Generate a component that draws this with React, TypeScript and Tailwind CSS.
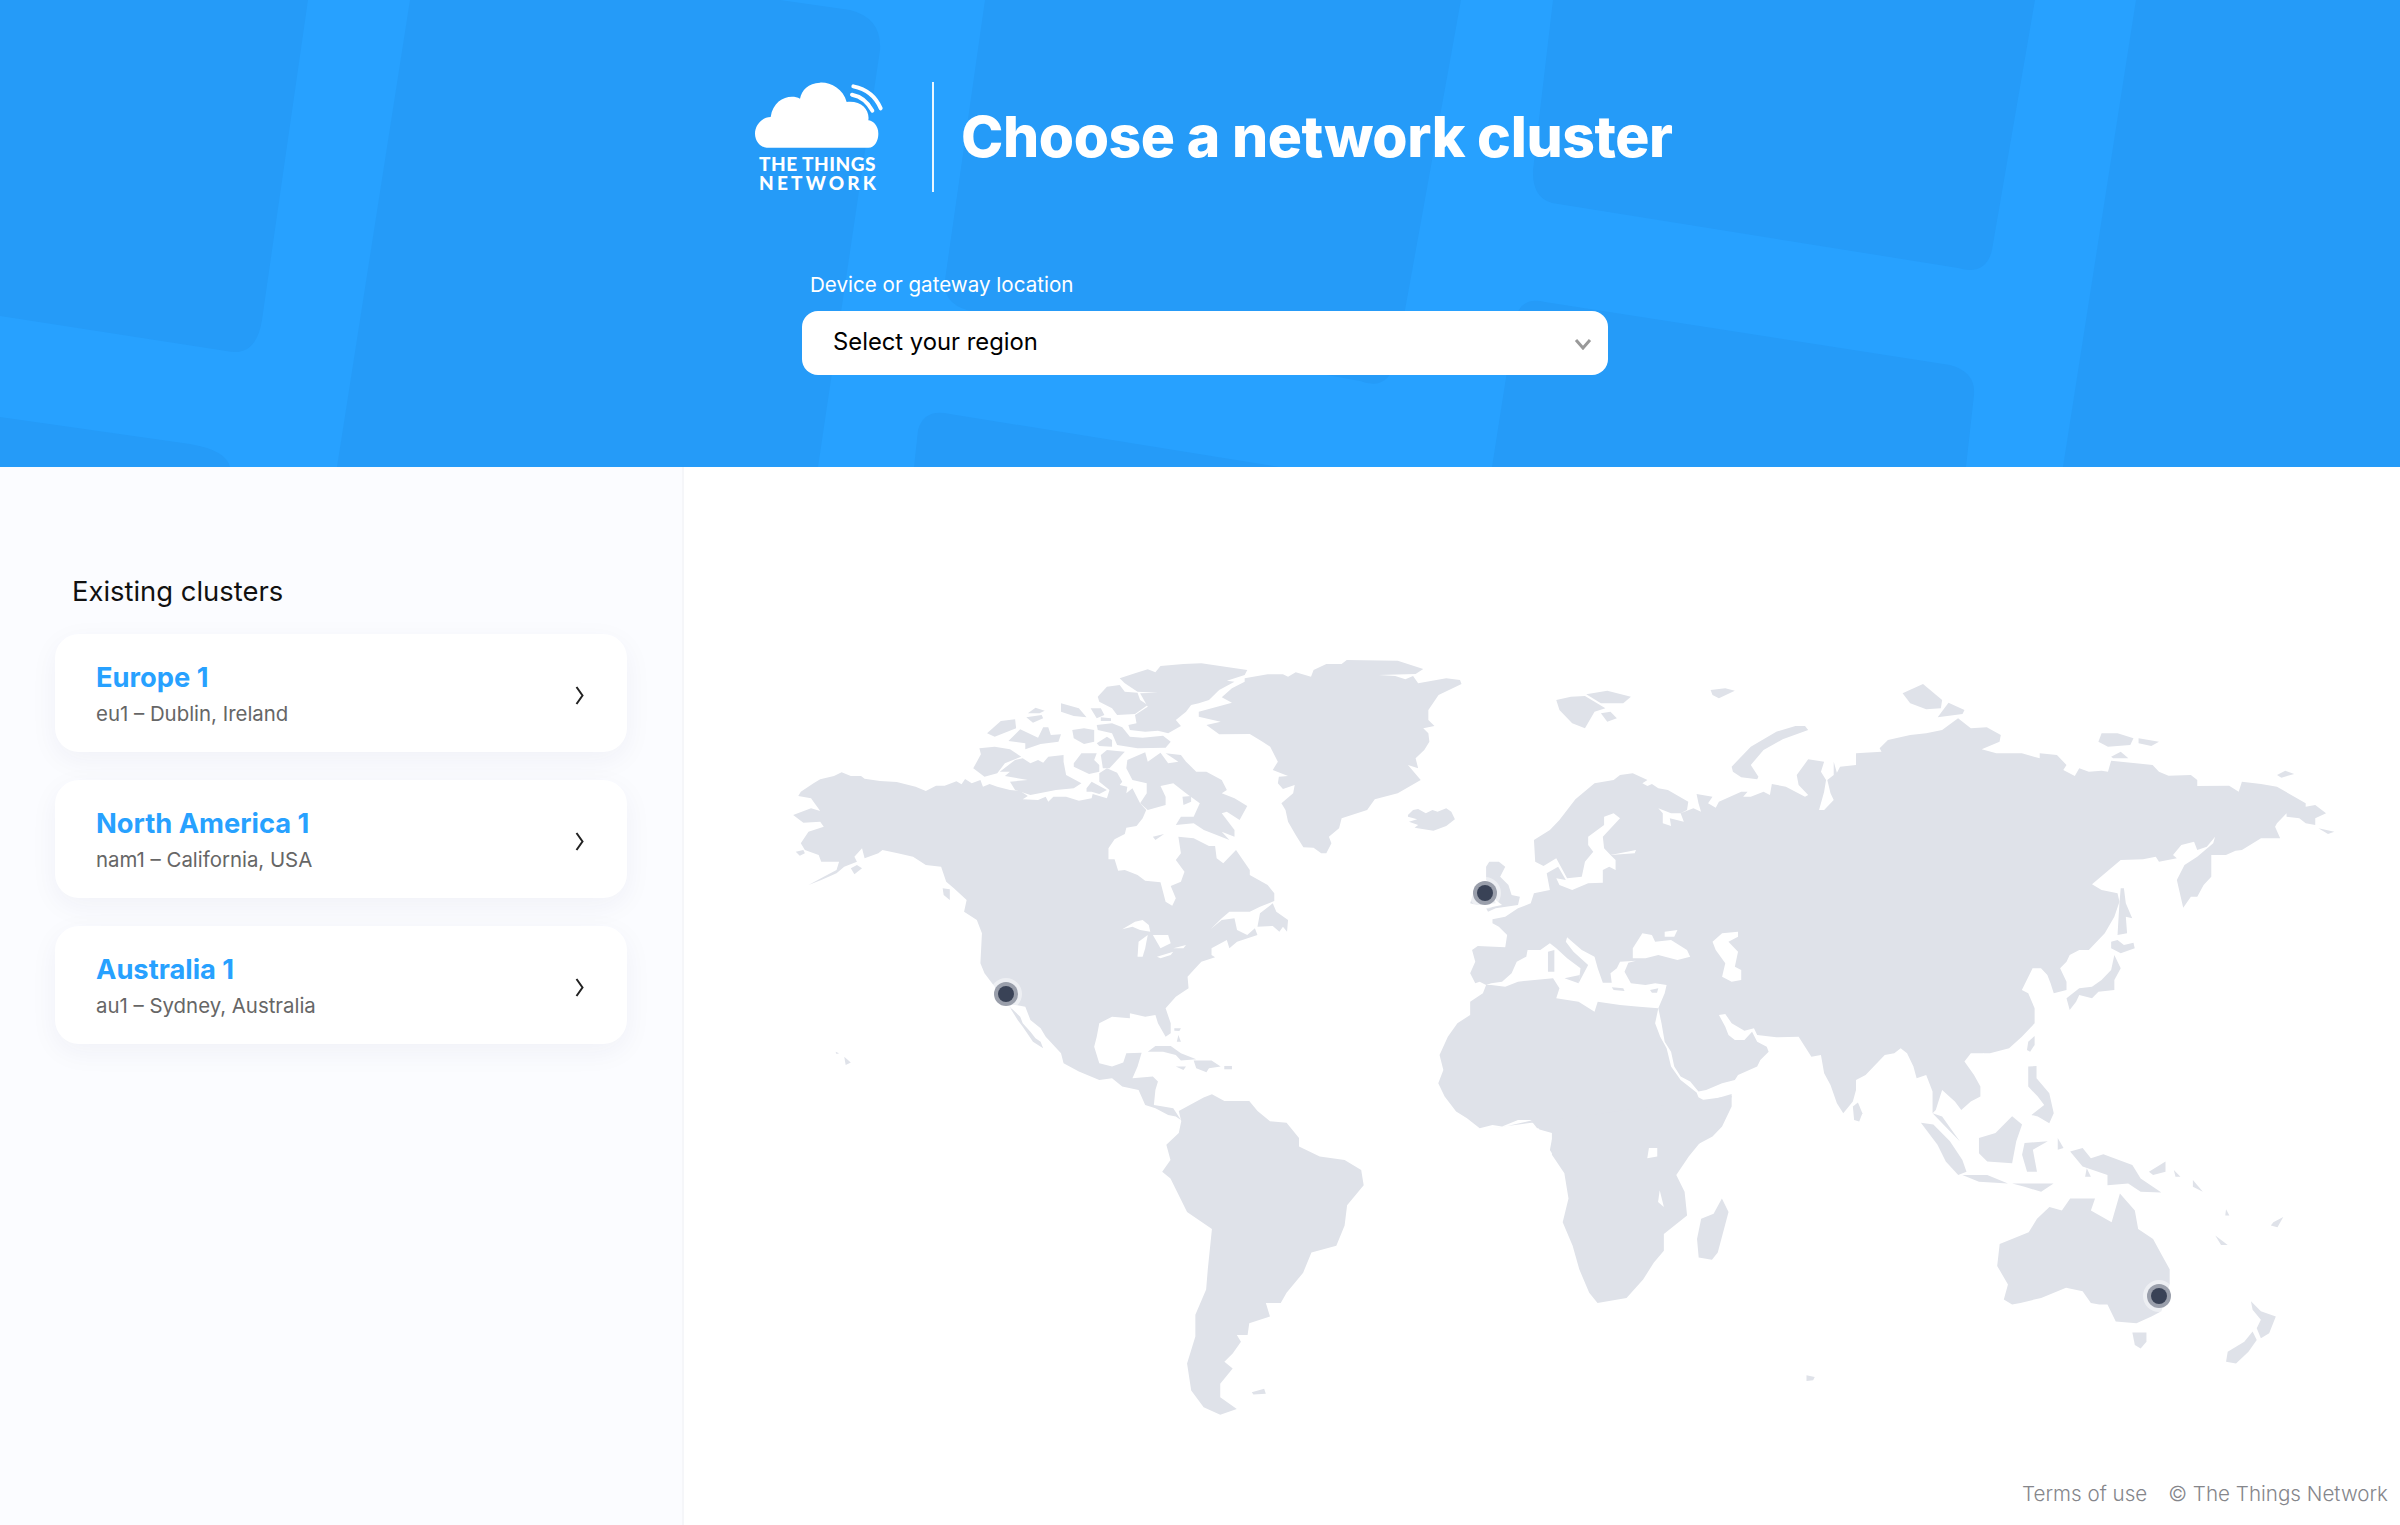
const sans = "font-['Inter','Liberation_Sans',sans-serif]";

// map outlines, traced from three crops, so each group has its own scale
const americas = [
  "65,525 100,505 118,513 100,475 75,468 80,455 105,430 118,418 145,408 160,397 178,408 198,408 205,416 235,423 268,426 305,440 325,453 345,437 362,437 385,424 395,433 402,417 415,430 432,420 437,440 450,432 465,440 490,450 510,453 525,468 515,478 545,480 560,470 565,485 575,470 600,470 625,482 650,475 652,462 670,470 680,475 685,450 665,425 665,400 680,385 700,398 710,425 705,435 720,440 718,460 730,445 745,490 757,510 750,535 738,558 718,563 715,582 695,598 683,625 683,658 695,658 702,692 715,690 740,705 755,722 785,727 795,785 808,797 815,775 805,738 825,725 832,695 815,660 825,640 820,590 850,595 880,618 892,618 895,655 908,670 933,630 960,690 960,705 995,735 1008,760 1008,783 980,800 960,815 920,815 905,835 883,868 905,840 930,835 935,870 955,885 970,865 975,885 935,905 920,925 915,900 885,925 885,945 892,952 865,965 850,990 838,1010 840,1045 815,1070 795,1105 805,1150 805,1180 795,1190 780,1150 775,1125 755,1130 725,1120 725,1135 690,1130 665,1150 660,1190 655,1220 665,1270 690,1280 712,1268 718,1240 748,1238 740,1280 730,1315 770,1310 780,1325 775,1350 772,1395 790,1400 810,1405 825,1440 815,1430 800,1425 775,1405 755,1395 742,1350 710,1340 690,1315 665,1320 625,1295 595,1270 590,1240 560,1190 550,1165 530,1140 520,1100 500,1095 485,1095 460,1040 440,1000 432,970 435,880 425,840 400,815 405,780 380,745 365,725 355,680 325,675 300,650 270,640 240,630 232,640 205,655 200,625 185,650 190,665 165,680 150,700 120,720 95,735 125,710 150,690 155,665 120,665 115,645 88,630 80,610 95,575 125,560 118,545 85,548",
  "720,360 755,337 760,365 785,338 800,370 820,365 795,340 825,345 835,365 855,395 875,395 905,420 915,450 905,460 930,475 955,498 940,540 915,515 905,520 930,570 930,590 905,575 920,600 870,570 850,550 815,555 825,530 850,530 862,490 835,460 810,430 785,438 795,470 795,495 760,510 745,490 758,460 758,430 730,420 718,385",
  "705,115 735,100 760,88 775,97 785,78 830,72 865,70 955,90 950,105 915,122 930,125 900,150 880,180 860,190 845,195 835,215 815,240 825,258 800,280 780,272 755,275 725,270 722,255 738,250 735,225 760,200 745,160 780,158 740,155 715,130",
  "662,170 680,140 705,135 715,155 740,158 745,180 760,195 735,222 700,225 690,205 665,185",
  "660,255 690,250 710,262 725,290 750,293 790,287 805,305 795,323 740,325 700,315 690,280 662,270",
  "660,310 680,290 690,300 690,320 665,318",
  "668,232 688,235 688,243 668,243",
  "648,205 668,205 675,225 660,235",
  "590,190 625,205 640,232 615,228 590,215",
  "525,220 540,203 558,212 548,220",
  "522,232 552,225 555,235 535,248",
  "445,280 472,243 500,238 502,265 460,290",
  "487,303 510,268 545,293 555,262 565,262 570,285 590,283 585,305 550,312 520,328 520,310",
  "612,270 635,265 655,270 655,305 635,312 615,295",
  "430,325 460,320 490,328 512,350 480,370 465,400 440,410 418,385 433,343",
  "470,395 500,360 515,355 530,370 545,360 555,368 565,350 595,345 595,365 600,405 630,430 615,445 580,450 530,465 500,450 490,425 525,420 480,408 490,395",
  "615,370 630,340 660,340 655,360 665,375 665,395 645,402 615,380",
  "668,345 680,330 715,335 700,360 685,385 672,385",
  "640,445 650,425 680,450 665,462 650,455 640,455",
  "860,215 925,188 905,172 925,145 950,125 950,115 995,103 1025,103 1035,110 1050,97 1080,110 1085,90 1110,72 1140,72 1150,60 1250,62 1300,87 1285,102 1212,105 1245,108 1265,118 1280,108 1290,130 1345,115 1372,120 1375,132 1330,165 1310,210 1310,240 1322,258 1300,265 1310,280 1312,305 1302,330 1285,355 1290,385 1270,375 1295,420 1250,460 1205,478 1190,510 1140,535 1135,565 1115,590 1120,610 1110,640 1100,640 1085,623 1065,622 1050,585 1035,545 1030,510 1022,490 1045,460 1048,435 1025,447 1015,430 1017,410 1035,408 1005,390 1015,365 1000,320 985,305 960,282 900,283 875,255 903,245 860,230",
  "1270,525 1280,510 1290,507 1305,520 1318,510 1328,515 1345,505 1355,515 1362,538 1345,558 1320,572 1283,563 1290,555 1272,545 1288,538 1270,530",
  "975,860 980,820 1005,790 1012,815 1035,840 1033,875 1025,860 1018,875 1005,858",
  "770,590 792,582 775,600",
  "828,470 845,468 845,485 830,495",
  "358,745 372,748 372,780 360,765",
  "760,1235 775,1218 805,1218 825,1240 855,1258 825,1262 815,1245 790,1235",
  "850,1262 885,1262 903,1280 880,1285 875,1297 855,1285",
  "815,1280 835,1280 830,1290",
  "910,1278 925,1278 925,1288 910,1288",
  "812,1165 825,1165 822,1173 812,1172",
  "820,1185 825,1205 817,1205",
  "488,1098 510,1130 515,1150 530,1175 540,1195 550,1205 555,1225 535,1205 515,1160 505,1140",
  "70,635 85,630 88,640 78,647",
  "178,685 190,675 200,685 185,703",
  "148,1235 155,1240 150,1242",
  "165,1250 178,1268 168,1275",
];
const lakes = [
  "710,868 735,845 750,840 762,855 765,875 745,870 730,860",
  "740,950 742,905 760,885 755,925 750,950",
  "770,885 800,885 805,910 785,925",
  "778,950 810,935 805,945 785,955",
  "810,925 835,915 830,925",
];
const eurasia = [
  "210,600 235,570 250,540 275,478 305,430 335,420 345,405 365,400 388,420 380,430 388,438 395,432 405,445 420,450 452,485 450,510 440,520 425,520 405,505 412,520 412,550 425,558 423,535 445,545 440,520 460,505 472,515 468,490 465,462 490,470 483,490 495,503 500,485 535,455 545,455 538,470 550,470 570,455 580,465 583,432 605,440 635,470 640,465 625,435 622,405 640,358 665,365 660,395 668,420 665,455 657,510 665,510 680,480 675,460 670,420 680,405 680,365 685,398 690,380 715,375 715,340 755,335 752,325 765,300 800,285 825,280 850,270 875,235 895,265 920,262 942,285 940,305 912,328 935,340 975,340 1003,355 1003,340 1030,345 1045,375 1040,390 1058,408 1065,385 1080,395 1100,392 1110,395 1115,362 1180,375 1190,395 1205,407 1240,405 1250,420 1250,438 1300,437 1315,455 1320,425 1350,432 1375,440 1420,490 1420,500 1435,495 1452,520 1435,535 1435,555 1420,550 1410,535 1390,530 1390,520 1375,550 1372,560 1380,595 1350,595 1320,630 1310,632 1295,645 1272,645 1272,710 1260,735 1250,770 1240,770 1228,803 1218,720 1230,675 1250,650 1275,610 1278,590 1265,620 1250,630 1245,605 1225,615 1212,645 1218,655 1190,665 1185,650 1165,658 1130,660 1085,733 1100,750 1125,760 1128,785 1120,830 1105,880 1080,930 1065,930 1050,945 1045,965 1035,985 1045,1025 1045,1050 1025,1060 1020,1030 1015,1005 1005,985 990,985 980,1010 968,1000 965,990 990,965 993,980 975,1050 985,1060 995,1105 995,1150 975,1190 955,1225 925,1240 910,1240 895,1240 885,1265 900,1305 910,1340 910,1370 895,1385 880,1410 870,1385 850,1350 840,1410 835,1420 850,1430 865,1470 878,1505 855,1460 835,1420 835,1355 825,1305 810,1315 805,1280 795,1240 785,1225 775,1240 760,1245 745,1275 730,1305 715,1320 715,1350 710,1385 695,1420 685,1390 675,1335 665,1300 660,1245 645,1250 625,1190 590,1192 560,1185 555,1165 540,1172 520,1150 510,1122 500,1125 510,1160 515,1185 525,1200 540,1200 552,1175 560,1205 575,1220 578,1235 565,1260 560,1280 530,1305 525,1320 505,1330 480,1350 468,1355 455,1325 440,1310 430,1280 425,1235 415,1205 410,1150 405,1105 415,1060 418,1035 400,1030 385,1035 362,1030 352,995 358,968 370,962 345,965 340,985 330,1000 332,1028 318,1028 310,985 305,950 285,930 270,905 262,892 260,905 272,935 295,975 280,1030 283,985 262,955 245,925 235,910 220,930 200,930 198,950 183,965 175,1000 160,1025 143,1030 135,1035 125,1025 118,1030 110,1000 118,965 113,930 122,918 165,922 168,885 155,860 145,850 145,838 165,830 185,805 205,790 210,760 235,750 230,700 248,680 260,720 245,715 250,735 270,750 295,730 318,728 318,690 328,680 338,690 338,660 330,645 368,640 370,630 330,645 320,625 318,590 345,535 335,520 320,530 320,555 295,590 295,615 303,635 290,665 285,710 262,715 245,655 225,678 212,665",
  "135,1035 143,1035 165,1040 185,1025 240,1015 250,1045 245,1075 280,1085 305,1115 310,1085 345,1095 375,1100 405,1105 400,1150 408,1190 418,1225 425,1280 440,1320 465,1358 468,1372 480,1385 520,1362 520,1400 505,1460 490,1490 465,1515 445,1560 245,1560 235,1530 240,1480 230,1462 215,1465 205,1440 185,1440 160,1460 145,1455 125,1465 105,1435 88,1415 70,1370 60,1330 68,1290 62,1245 75,1190 90,1150 110,1125 110,1085 130,1060",
  "332,1042 350,1045 352,1053 335,1050",
  "392,1050 405,1045 403,1058 395,1058",
  "258,1015 282,1005 280,1030",
  "232,935 242,930 242,995 232,995",
  "135,680 140,665 155,665 165,680 157,710 170,735 175,765 188,770 185,795 150,805 138,815 135,805 160,795 150,780 150,745 135,720",
  "110,790 115,760 125,745 145,750 150,790 120,795",
  "245,180 268,170 290,168 322,205 305,215 290,265 270,250 250,210",
  "292,163 325,152 362,170 350,190 315,190",
  "315,220 330,215 340,235 325,245",
  "487,150 510,145 525,152 500,175 490,165",
  "520,380 550,320 590,275 620,258 635,258 640,270 600,298 570,330 550,375 562,410 560,418 535,412 522,395",
  "788,160 820,132 850,180 848,205 825,208 800,190",
  "843,232 860,188 885,210 882,222",
  "1095,305 1100,280 1125,280 1150,295 1145,315 1110,320",
  "1158,295 1190,305 1178,318 1158,310",
  "1115,350 1130,335 1142,355 1118,355",
  "1375,405 1388,392 1402,402 1382,413",
  "1440,565 1465,575 1455,582",
  "1130,745 1135,745 1138,790 1148,835 1138,830 1140,880 1125,885 1128,790",
  "1115,925 1130,940 1152,925 1150,908 1135,915 1125,900 1115,905",
  "1120,945 1130,985 1120,1020 1120,1050 1095,1055 1085,1075 1065,1065 1060,1085 1050,1110 1045,1075 1065,1045 1085,1040 1100,1020 1115,990",
  "983,1230 985,1205 995,1188 995,1215 988,1235",
  "710,1400 718,1388 725,1420 720,1445 712,1440",
  "985,1280 998,1278 998,1315 1018,1360 1025,1420 1018,1450 1000,1430 990,1425 1010,1395 1000,1370 985,1340",
];
const seas = [
  "365,955 365,925 380,880 395,885 400,905 425,900 450,930 455,950 435,960 405,945 385,955",
  "415,875 435,870 430,890 415,890",
  "490,905 505,880 530,875 530,890 515,905 530,935 525,980 535,990 535,1020 520,1025 505,1010 510,970 495,930",
  "905,1260 915,1240 920,1265 910,1285",
];
const south = [
  "95,330 125,290 135,280 150,300 180,300 190,330 205,360 225,365 240,410 240,435 265,465 295,475 315,505 318,550 298,610 295,670 285,730 255,750 245,810 225,870 218,900 200,900 205,940 180,960 178,995 165,995 170,1015 160,1050 150,1075 160,1095 145,1140 145,1180 165,1215 145,1232 125,1210 110,1160 105,1080 115,1000 115,935 128,860 130,800 135,680 105,630 85,530 75,510 85,475 80,430 95,395 98,360",
  "460,385 490,375 520,358 530,385 545,395 545,460 560,515 565,590 558,660 570,730 578,800 590,870 600,900 635,885 655,830 668,780 680,745 680,695 708,640 705,570 695,520 710,465 725,420 750,370 762,285",
  "750,590 758,630 745,750 738,772 722,765 720,710 725,650 740,635",
  "183,1165 198,1155 200,1170 185,1172",
  "852,1115 862,1120 860,1130 852,1132",
  "990,365 1005,370 1025,420 1040,475 1045,510 1035,520 1020,480 1010,430",
  "1040,520 1070,520 1095,545 1060,540",
  "1060,410 1080,395 1100,345 1112,370 1105,420 1100,485 1070,480 1060,455",
  "1115,425 1143,420 1125,445 1130,510 1118,510 1112,460",
  "1100,545 1150,545 1135,570 1115,555",
  "1170,450 1185,440 1195,470 1210,458 1245,490 1255,530 1280,572 1255,570 1240,545 1215,550 1215,520 1185,495",
  "1155,410 1162,440 1155,445",
  "1190,500 1195,525 1188,525",
  "1265,510 1285,480 1285,510 1270,520",
  "1295,505 1303,525 1297,525",
  "1318,535 1330,570 1318,555",
  "1358,622 1362,640 1357,640",
  "1415,660 1427,645 1420,675 1412,670",
  "1345,700 1360,728 1352,728",
  "1085,725 1120,690 1130,650 1145,615 1160,625 1170,590 1200,590 1195,625 1220,660 1230,575 1248,625 1252,680 1270,710 1280,755 1290,800 1290,845 1280,925 1268,940 1250,960 1225,955 1215,905 1205,905 1195,900 1185,865 1165,855 1135,885 1110,900 1100,905 1090,890 1095,845 1082,790",
  "1245,988 1262,988 1262,1015 1255,1035 1248,1025",
  "1388,895 1400,925 1418,940 1410,990 1400,1005 1395,975 1400,950 1390,920",
  "1390,985 1395,1010 1385,1045 1370,1080 1358,1075 1360,1045 1380,1015",
];
const africaLakes = ["662,440 672,440 672,465 660,470", "675,565 680,615 673,600"];

const pins = [
  [1006, 994],
  [1485, 893],
  [2159, 1296],
];

const clusters = [
  { name: "Europe 1", sub: "eu1 – Dublin, Ireland" },
  { name: "North America 1", sub: "nam1 – California, USA" },
  { name: "Australia 1", sub: "au1 – Sydney, Australia" },
];

function Logo() {
  return (
    <div className="w-[130px] flex flex-col">
      <svg width="130" height="66" viewBox="45 35 390 198" fill="none">
        <path
          d="M80 232H385C405 232 415 210 415 190C415 165 397 150 385 150C390 120 365 90 320 95C310 55 270 35 240 37C205 38 185 60 180 85C150 70 100 85 92 140C65 140 45 165 45 190C45 215 65 232 80 232Z"
          fill="white"
        />
        <path d="M340 48C378 56 408 80 422 114" stroke="white" strokeWidth="12" strokeLinecap="round" />
        <path d="M336 73C362 78 384 96 397 121" stroke="white" strokeWidth="12" strokeLinecap="round" />
      </svg>
      <div className="mt-[6px] ml-[4px] text-[19px] leading-[19px] font-black text-white tracking-[0.5px] font-['Lato',sans-serif] whitespace-nowrap">
        THE THINGS
      </div>
      <div className="ml-[4px] text-[19px] leading-[19px] font-black text-white tracking-[3.2px] font-['Lato',sans-serif] whitespace-nowrap">
        NETWORK
      </div>
    </div>
  );
}

function WorldMap() {
  return (
    <svg className="w-full h-full block" viewBox="684 467 1716 1058">
      <g transform="translate(760 640) scale(0.5102 0.3333)" fill="#dfe2e9">
        {americas.map((p, i) => (
          <polygon key={i} points={p} />
        ))}
        {lakes.map((p, i) => (
          <polygon key={i} points={p} fill="#ffffff" />
        ))}
      </g>
      <g transform="translate(1400 640) scale(0.6378 0.3333)" fill="#dfe2e9">
        {eurasia.map((p, i) => (
          <polygon key={i} points={p} />
        ))}
        {seas.map((p, i) => (
          <polygon key={i} points={p} fill="#ffffff" />
        ))}
      </g>
      <g transform="translate(1100 1000) scale(0.8292 0.3366)" fill="#dfe2e9">
        {south.map((p, i) => (
          <polygon key={i} points={p} />
        ))}
        {africaLakes.map((p, i) => (
          <polygon key={i} points={p} fill="#ffffff" />
        ))}
      </g>
      {pins.map(([x, y]) => (
        <g key={x}>
          <circle cx={x} cy={y} r="16" fill="#ffffff" fillOpacity="0.45" />
          <circle cx={x} cy={y} r="12" fill="#9a9fab" />
          <circle cx={x} cy={y} r="8" fill="#394256" />
        </g>
      ))}
    </svg>
  );
}

export default function App() {
  return (
    <div className={`h-[1525px] flex flex-col bg-white overflow-hidden ${sans}`}>
      {/* Header */}
      <div className="relative h-[467px] shrink-0 bg-[#27a1ff] overflow-hidden">
        <svg className="absolute inset-0" width="2400" height="467" viewBox="0 0 2400 467" fill="#259bf8">
          <path d="M0 0H308L262 320Q256 358 226 351L0 316Z" />
          <path d="M410 0H780L850 10Q882 18 880 50L818 467H337Z" />
          <path d="M985 0H1461L1396 360Q1388 392 1360 381L975 312Q942 306 945 280Z" />
          <path d="M1553 0H2035L1992 250Q1986 276 1958 268L1552 203Q1532 198 1533 170Z" />
          <path d="M1515 320Q1520 296 1545 302L1950 365Q1976 372 1974 395L1966 467H1492Z" />
          <path d="M2136 0H2400V467H2063Z" />
          <path d="M0 417L190 444Q226 450 230 467H0Z" />
          <path d="M914 467L918 430Q924 408 950 414L1280 467Z" />
        </svg>
        <div className="relative pt-[82px] pl-[755px] flex items-start">
          <Logo />
          <div className="w-[2px] h-[110px] bg-white/90 ml-[47px]" />
          <h1 className="ml-[27px] mt-[20px] text-[57px] leading-[70px] font-extrabold text-white tracking-[-0.4px] whitespace-nowrap">
            Choose a network cluster
          </h1>
        </div>
        <div className="relative mt-[80px] ml-[802px] w-[806px]">
          <div className="pl-[8px] text-[20.6px] leading-[26px] text-white mb-[13px]">Device or gateway location</div>
          <div className="h-[64px] rounded-[16px] bg-white flex items-center justify-between pl-[31px] pr-[16px]">
            <span className="text-[23.8px] text-black -mt-[3px]">Select your region</span>
            <svg width="18" height="12" viewBox="0 0 18 12" fill="none" className="mt-[2px]">
              <path d="M2 2L9 10L16 2" stroke="#999999" strokeWidth="3" />
            </svg>
          </div>
        </div>
      </div>

      <div className="flex-1 flex min-h-0">
        {/* Existing clusters */}
        <div className="w-[684px] shrink-0 bg-[#fbfcff] border-r-2 border-[#f5f6f9] pl-[55px] pt-[106px]">
          <h2 className="pl-[17px] text-[27.4px] leading-[36px] text-[#111] mb-[25px]">Existing clusters</h2>
          <div className="w-[572px] flex flex-col gap-[28px]">
            {clusters.map((c) => (
              <div
                key={c.name}
                className="h-[118px] rounded-[24px] bg-white shadow-[0_8px_28px_rgba(30,40,90,0.05)] flex items-center justify-between pl-[41px] pr-[43px]"
              >
                <div className="mt-[2px]">
                  <div className="text-[27.3px] leading-[36px] font-bold text-[#27a1ff]">{c.name}</div>
                  <div className="text-[20.4px] leading-[28px] mt-[4px] text-[#666666]">{c.sub}</div>
                </div>
                <svg width="9" height="19" viewBox="0 0 9 19" fill="none" className="mt-[4px]">
                  <path d="M1.5 1L7.5 9.5L1.5 18" stroke="#222222" strokeWidth="2" />
                </svg>
              </div>
            ))}
          </div>
        </div>

        {/* Map */}
        <div className="relative flex-1 min-w-0">
          <WorldMap />
          <div className="absolute right-[12px] bottom-[17px] flex gap-[21px] text-[20.6px] leading-[28px] font-light text-[#85868b]">
            <span>Terms of use</span>
            <span>© The Things Network</span>
          </div>
        </div>
      </div>
    </div>
  );
}
